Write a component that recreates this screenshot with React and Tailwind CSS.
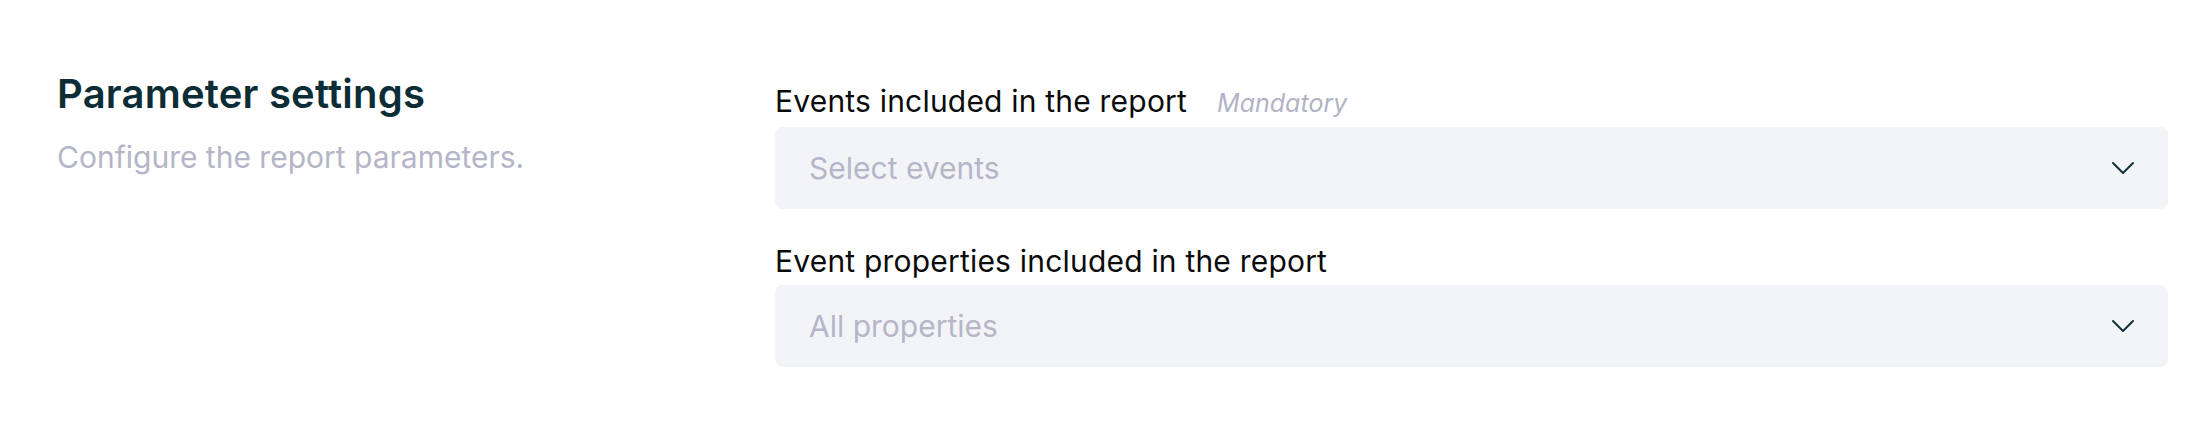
import { ChevronDown } from 'lucide-react'

function SelectField({ label, hint, placeholder }) {
  return (
    <div className="flex flex-col">
      <div className="flex items-baseline gap-[30px]">
        <span className="text-[30px] leading-[36px] tracking-[0.2px] text-[#0b0b0b]">{label}</span>
        {hint && <span className="text-[25px] leading-[36px] italic text-[#b3b3c6]">{hint}</span>}
      </div>
      <button className="mt-[6px] flex h-[82px] w-full items-center justify-between rounded-[8px] bg-[#f3f4f8] pl-[34px] pr-[25px] text-left">
        <span className="text-[30px] text-[#b6b6c8]">{placeholder}</span>
        <ChevronDown className="h-[40px] w-[40px] text-[#12333b]" strokeWidth={1.2} />
      </button>
    </div>
  )
}

export default function App() {
  return (
    <div className="min-h-[448px] bg-white font-['Inter',sans-serif]">
      <div className="flex pl-[57px] pr-[40px] pt-[70px]">
        {/* Left - section description */}
        <div className="w-[718px] shrink-0">
          <h2 className="text-[40px] font-semibold leading-[48px] tracking-[0.2px] text-[#0c2d35]">Parameter settings</h2>
          <p className="mt-[21px] text-[30px] leading-[36px] text-[#b5b5c8]">Configure the report parameters.</p>
        </div>

        {/* Right - fields */}
        <div className="flex flex-1 flex-col gap-[34px] pt-[13px]">
          <SelectField label="Events included in the report" hint="Mandatory" placeholder="Select events" />
          <SelectField label="Event properties included in the report" placeholder="All properties" />
        </div>
      </div>
    </div>
  )
}
